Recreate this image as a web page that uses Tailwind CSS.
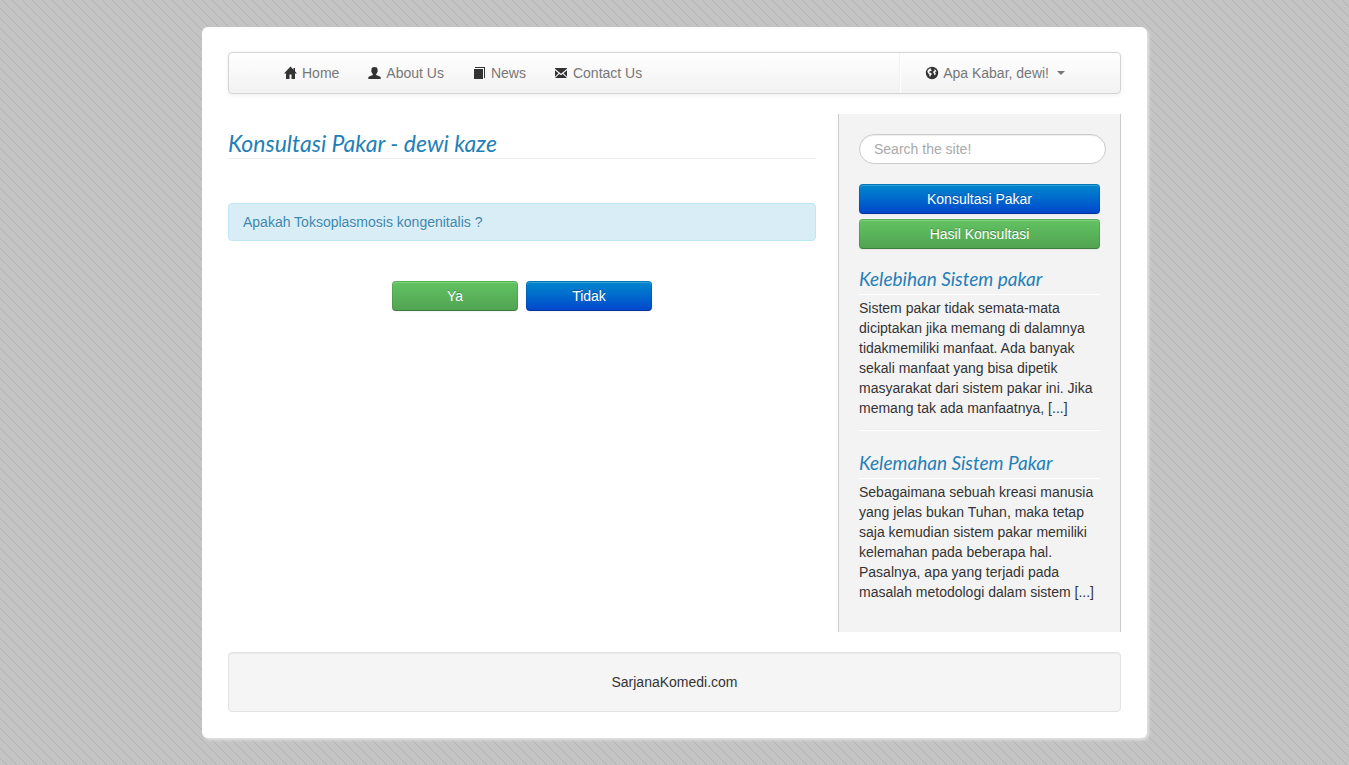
<!DOCTYPE html>
<html lang="id">
<head>
<meta charset="utf-8">
<meta name="viewport" content="width=device-width, initial-scale=1">
<title>Konsultasi Pakar</title>
<script src="https://cdn.jsdelivr.net/npm/@tailwindcss/browser@4"></script>
</head>
<body class="relative isolate min-h-screen bg-[#c4c4c4] py-[27px] font-['Liberation_Sans',Arial,sans-serif] text-sm leading-5 text-[#333]">
<svg class="absolute inset-0 -z-10 h-full w-full" aria-hidden="true" shape-rendering="crispEdges">
  <defs><pattern id="stripes" x="2" width="10" height="10" patternUnits="userSpaceOnUse"><path fill="#b3b3b3" d="M0 0h1v1H0zM1 1h1v1H1zM2 2h1v1H2zM3 3h1v1H3zM4 4h1v1H4zM5 5h1v1H5zM6 6h1v1H6zM7 7h1v1H7zM8 8h1v1H8zM9 9h1v1H9z"/></pattern></defs>
  <rect width="100%" height="100%" fill="url(#stripes)"/>
</svg>
<div class="mx-auto max-w-[945px] rounded-md bg-white px-[26px] pt-[25px] pb-[26px] shadow-[2px_2px_3px_#e2e2e2]">
  <nav class="flex flex-wrap items-stretch justify-between rounded border border-[#d4d4d4] bg-linear-to-b from-white to-[#f2f2f2] px-10 text-[#777] shadow-[0_1px_4px_rgba(0,0,0,0.07)]">
    <ul class="flex flex-wrap">
      <li><a href="#" class="flex items-center gap-1 py-[10px] pr-[14px] pl-[15px]"><svg class="size-[14px]" viewBox="0 0 14 14" fill="#333" aria-hidden="true"><path d="M6.500 .5 0 7.500h2V13h3.500V8.500h2V13H11V7.500h2L11 5.300V2H9.500v1.700z"/></svg>Home</a></li>
      <li><a href="#" class="flex items-center gap-1 py-[10px] pr-[14px] pl-[15px]"><svg class="size-[14px]" viewBox="0 0 14 14" fill="#333" aria-hidden="true"><path d="M3.500 3.300C3.500 1.800 4.600 1 6.500 1s3 .8 3 2.300v.9c.4.2.4 1.300-.1 1.700-.2 1-.7 1.600-1.200 2v1.200l3.700 1.400c.6.300.8.800.8 1.500v1H.3v-1c0-.7.2-1.200.8-1.500l3.700-1.400V7.900C4.300 7.500 3.800 6.900 3.600 5.900 3.100 5.500 3.100 4.400 3.500 4.200z"/></svg>About Us</a></li>
      <li><a href="#" class="flex items-center gap-1 py-[10px] pr-[14px] pl-[15px]"><svg class="size-[14px]" viewBox="0 0 14 14" fill="#333" shape-rendering="crispEdges" aria-hidden="true"><path d="M1 3h9v10H1zM2 1h10v11h-1V2H1z"/></svg>News</a></li>
      <li><a href="#" class="flex items-center gap-1 py-[10px] pr-[14px] pl-[15px]"><svg class="size-[14px]" viewBox="0 0 14 14" fill="#333" aria-hidden="true"><path d="M0 2h12v.8L6 7.800 0 2.800zM0 4.200l3.500 3L0 10.700zM12 4.200v6.500L8.500 7.200zM4.300 7.900 6 9.300l1.700-1.400L12 12H0z"/></svg>Contact Us</a></li>
    </ul>
    <div class="flex border-l border-[#f2f2f2]"><button type="button" class="flex items-center gap-1 border-l border-white py-[10px] pr-[15px] pl-6"><svg class="size-[14px]" viewBox="0 0 14 14" aria-hidden="true"><circle cx="7" cy="7" r="6.200" fill="#333"/><path fill="#f9f9f9" d="M2.300 5 4.200 2.800 6.200 2.300l-.5 1.200 1.200.4-.7 1-1.400.4-.8 1.200 1.700.3 1.300 1.100-1.100 1.300-.7 1.500-.7-.4-.3-2-1.300-1.400zM9.200 3l1.500 1 .9 1.700-.9-.2-.7.900.9 1.100-.8 1.400-.8.3-.3-1.700-.8-.8.2-1.500 1.300-.8z"/></svg>Apa Kabar, dewi!<span class="ml-1 border-x-4 border-t-4 border-x-transparent border-t-[#777]"></span></button></div>
  </nav>

  <div class="mt-5 flex flex-wrap items-stretch gap-[22px] md:flex-nowrap">
    <main class="min-w-0 flex-1 basis-80">
      <h1 class="mt-[14px] border-b border-[#eee] font-['Segoe_Print','Bradley_Hand',Lato,cursive] text-[23px] leading-[30px] text-[#1f80b8] italic">Konsultasi Pakar - dewi kaze</h1>
      <p class="mt-11 rounded border border-[#bce8f1] bg-[#d9edf7] px-[14px] py-2 text-[#3a87ad] [text-shadow:0_1px_0_rgba(255,255,255,0.5)]">Apakah Toksoplasmosis kongenitalis ?</p>
      <div class="mt-10 flex justify-center gap-2">
        <button type="button" class="h-[30px] w-[126px] rounded border border-black/10 border-b-black/25 bg-linear-to-b from-[#62c462] to-[#51a351] bg-origin-border text-white shadow-[inset_0_1px_0_rgba(255,255,255,0.2),0_1px_2px_rgba(0,0,0,0.05)] [text-shadow:0_-1px_0_rgba(0,0,0,0.25)]">Ya</button>
        <button type="button" class="h-[30px] w-[126px] rounded border border-black/10 border-b-black/25 bg-linear-to-b from-[#0088cc] to-[#0044cc] bg-origin-border text-white shadow-[inset_0_1px_0_rgba(255,255,255,0.2),0_1px_2px_rgba(0,0,0,0.05)] [text-shadow:0_-1px_0_rgba(0,0,0,0.25)]">Tidak</button>
      </div>
    </main>
    <aside class="w-full border-x border-[#ccc] bg-[#f3f3f3] px-5 pt-5 pb-[30px] md:w-[283px] md:shrink-0">
      <input type="search" aria-label="Search the site!" placeholder="Search the site!" class="-mr-[6px] block h-[30px] w-[calc(100%+6px)] rounded-full border border-[#ccc] bg-white px-[14px] shadow-[inset_0_1px_1px_rgba(0,0,0,0.075)] placeholder:text-[#aaa]">
      <a href="#" class="mt-5 block rounded border border-black/10 border-b-black/25 bg-linear-to-b from-[#0088cc] to-[#0044cc] bg-origin-border py-1 text-center text-white shadow-[inset_0_1px_0_rgba(255,255,255,0.2),0_1px_2px_rgba(0,0,0,0.05)] [text-shadow:0_-1px_0_rgba(0,0,0,0.25)]">Konsultasi Pakar</a>
      <a href="#" class="mt-[5px] block rounded border border-black/10 border-b-black/25 bg-linear-to-b from-[#62c462] to-[#51a351] bg-origin-border py-1 text-center text-white shadow-[inset_0_1px_0_rgba(255,255,255,0.2),0_1px_2px_rgba(0,0,0,0.05)] [text-shadow:0_-1px_0_rgba(0,0,0,0.25)]">Hasil Konsultasi</a>
      <section class="mt-[15px]">
        <h2 class="border-b border-white font-['Segoe_Print','Bradley_Hand',Lato,cursive] text-[19px] leading-[30px] text-[#1f80b8] italic"><a href="#">Kelebihan Sistem pakar</a></h2>
        <p class="mt-[3px]">Sistem pakar tidak semata-mata diciptakan jika memang di dalamnya tidakmemiliki manfaat. Ada banyak sekali manfaat yang bisa dipetik masyarakat dari sistem pakar ini. Jika memang tak ada manfaatnya, [...]</p>
      </section>
      <hr class="mt-[11px] border-t border-b border-t-[#eee] border-b-white">
      <section class="mt-[17px]">
        <h2 class="border-b border-white font-['Segoe_Print','Bradley_Hand',Lato,cursive] text-[19px] leading-[30px] text-[#1f80b8] italic"><a href="#">Kelemahan Sistem Pakar</a></h2>
        <p class="mt-[3px]">Sebagaimana sebuah kreasi manusia yang jelas bukan Tuhan, maka tetap saja kemudian sistem pakar memiliki kelemahan pada beberapa hal. Pasalnya, apa yang terjadi pada masalah metodologi dalam sistem [...]</p>
      </section>
    </aside>
  </div>
  <footer class="mt-5 rounded border border-[#e3e3e3] bg-[#f5f5f5] py-[19px] text-center shadow-[inset_0_1px_1px_rgba(0,0,0,0.05)]">SarjanaKomedi.com</footer>
</div>
</body>
</html>
